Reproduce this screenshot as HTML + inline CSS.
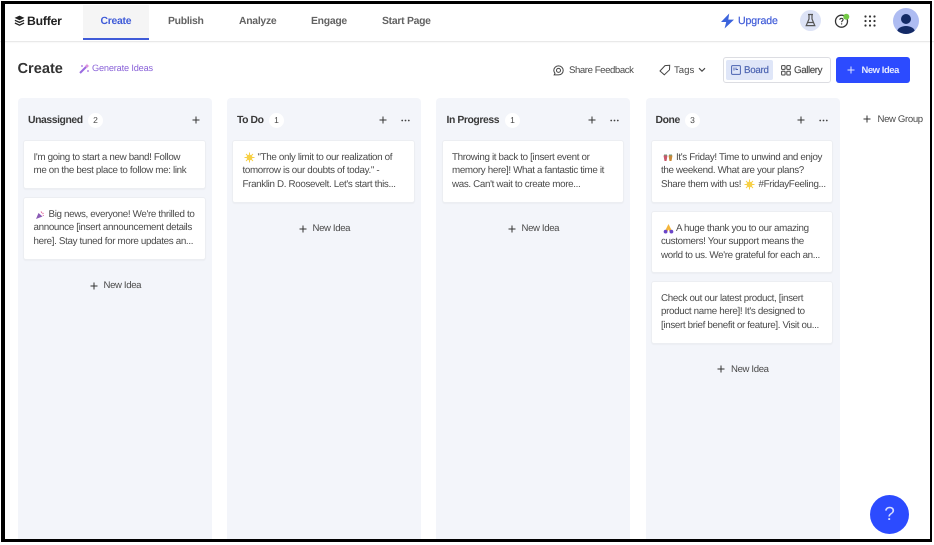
<!DOCTYPE html>
<html lang="en">
<head>
<meta charset="utf-8">
<title>Buffer Create</title>
<style>
html,body{margin:0;padding:0;background:#fff}
body{width:934px;height:544px;overflow:hidden;position:relative;font-family:"Liberation Sans",sans-serif;color:#3d3d3d;text-rendering:geometricPrecision}
#p{position:absolute;left:0;top:0;width:934px;height:544px;overflow:hidden;background:#fff;filter:blur(.35px)}
#p div,#p svg{position:absolute}
.t{white-space:nowrap;line-height:14px}
.nav{top:14.7px;font-size:10.4px;font-weight:bold;color:#636363;letter-spacing:-.27px}
.col{top:98px;width:193.5px;height:445px;background:#f3f5fa;border-radius:4px}
.card{width:182.5px;background:#fff;border:1px solid #eceef2;border-radius:3px;box-sizing:border-box;box-shadow:0 1px 1px rgba(0,0,0,.03)}
.l{font-size:9.8px;letter-spacing:-.34px;color:#4a4a4a;white-space:nowrap;line-height:13.5px}
.h{top:113.5px;font-size:10.4px;font-weight:bold;color:#3a3a3a;white-space:nowrap;line-height:14px;letter-spacing:-.42px}
.bd{top:112.5px;width:15px;height:15px;border-radius:50%;background:#fff;font-size:8.5px;text-align:center;line-height:15px;color:#444}
.ni{font-size:9.6px;color:#4a4a4a;white-space:nowrap;line-height:14px;letter-spacing:-.36px}
.f{position:absolute;background:#000}
</style>
</head>
<body>
<div id="p">

<!-- top nav -->
<div style="left:0;top:0;width:934px;height:41px;background:#fff;border-bottom:1px solid #e9e9e9;box-shadow:0 1px 1px rgba(0,0,0,.03)"></div>
<div style="left:83px;top:5px;width:66px;height:34px;background:#f5f5f5"></div>
<div style="left:83px;top:38px;width:66px;height:2px;background:#3f5bd8"></div>

<svg style="left:14px;top:15px" width="11" height="12" viewBox="0 0 11 12"><path d="M5.5 .6 10.4 2.9 5.5 5.2 .6 2.9Z" fill="#222"/><path d="M.9 5.3 5.5 7.4 10.1 5.3" fill="none" stroke="#222" stroke-width="1.3"/><path d="M.9 8 5.5 10.2 10.1 8" fill="none" stroke="#222" stroke-width="1.3"/></svg>
<div class="t" style="left:27px;top:14px;font-size:12.2px;font-weight:bold;color:#222;letter-spacing:-.2px">Buffer</div>
<div class="t nav" style="left:100.5px;color:#3f5bd8">Create</div>
<div class="t nav" style="left:168px">Publish</div>
<div class="t nav" style="left:239px">Analyze</div>
<div class="t nav" style="left:311px">Engage</div>
<div class="t nav" style="left:382px">Start Page</div>

<svg style="left:720px;top:13px" width="15" height="16" viewBox="0 0 15 16"><path d="M9.2 .5 1 9H6.2L4.6 15.5 14 6.6H8.3Z" fill="#3b63dc"/></svg>
<div class="t nav" style="left:738px;top:14px;color:#3f5bd8;font-weight:normal;font-size:10.6px;letter-spacing:-.12px;-webkit-text-stroke:.2px #3f5bd8">Upgrade</div>

<div style="left:800px;top:10px;width:21px;height:21px;border-radius:50%;background:#dde3f6"></div>
<svg style="left:804px;top:13px" width="13" height="15" viewBox="0 0 13 15"><path d="M4 1.5H9M5 1.5V6L2.2 12.6H10.8L8 6V1.5M3.6 9.5H9.4" fill="none" stroke="#555" stroke-width="1.2"/></svg>
<svg style="left:834px;top:13px" width="16" height="16" viewBox="0 0 16 16"><circle cx="7.5" cy="8.2" r="6" fill="none" stroke="#333" stroke-width="1.3"/><path d="M5.8 6.8C5.9 5.6 6.8 5.2 7.6 5.3 8.6 5.4 9.3 6.1 9 7 8.8 7.8 7.6 8 7.6 9.2" fill="none" stroke="#333" stroke-width="1.1"/><circle cx="7.6" cy="10.9" r=".7" fill="#333"/><circle cx="12.3" cy="3.8" r="3" fill="#74c946"/></svg>
<svg style="left:864px;top:15px" width="12" height="12" viewBox="0 0 12 12" fill="#333"><circle cx="1.5" cy="1.5" r="1.1"/><circle cx="6" cy="1.5" r="1.1"/><circle cx="10.5" cy="1.5" r="1.1"/><circle cx="1.5" cy="6" r="1.1"/><circle cx="6" cy="6" r="1.1"/><circle cx="10.5" cy="6" r="1.1"/><circle cx="1.5" cy="10.5" r="1.1"/><circle cx="6" cy="10.5" r="1.1"/><circle cx="10.5" cy="10.5" r="1.1"/></svg>
<svg style="left:893px;top:8px" width="26" height="26" viewBox="0 0 26 26"><defs><clipPath id="av"><circle cx="13" cy="13" r="13"/></clipPath></defs><circle cx="13" cy="13" r="13" fill="#aebcf2"/><g clip-path="url(#av)"><circle cx="13" cy="11" r="5" fill="#132a66"/><ellipse cx="13" cy="24" rx="9" ry="6" fill="#132a66"/></g></svg>

<!-- toolbar -->
<div class="t" style="left:17.5px;top:61px;font-size:14.6px;font-weight:bold;color:#333;line-height:17px">Create</div>
<svg style="left:79px;top:63px" width="11" height="11" viewBox="0 0 11 11"><path d="M1 10 7 4" stroke="#9a6be0" stroke-width="2" fill="none"/><path d="M8 .5 8.7 2.3 10.5 3 8.7 3.7 8 5.5 7.3 3.7 5.5 3 7.3 2.3Z" fill="#d884d8"/><circle cx="3" cy="3" r="1" fill="#b58ae8"/><circle cx="9" cy="8" r="1" fill="#b58ae8"/></svg>
<div class="t" style="left:92px;top:61px;font-size:9.2px;color:#8a63d8;letter-spacing:-.17px">Generate Ideas</div>

<svg style="left:553px;top:65px" width="11" height="11" viewBox="0 0 11 11"><path d="M5.5 .9C8.2.9 10.2 2.9 10.2 5.4 10.2 7.9 8.2 9.9 5.5 9.9H1.2L2 8.2C1.2 7.4.8 6.5.8 5.4.8 2.9 2.8.9 5.5.9Z" fill="none" stroke="#444" stroke-width="1"/><circle cx="5.5" cy="5.4" r="2" fill="none" stroke="#444" stroke-width="1"/></svg>
<div class="t" style="left:569px;top:64px;font-size:9.6px;color:#4a4a4a;letter-spacing:-.42px">Share Feedback</div>
<svg style="left:659px;top:64px" width="12" height="12" viewBox="0 0 12 12"><path d="M1 7 6 1.6 10.7 1.3 10.5 5.800 5.300 10.800Z" fill="none" stroke="#444" stroke-width="1"/></svg>
<div class="t" style="left:674px;top:64px;font-size:9.6px;color:#4a4a4a">Tags</div>
<svg style="left:698px;top:67px" width="8" height="6" viewBox="0 0 8 6"><path d="M1 1.2 4 4.2 7 1.2" fill="none" stroke="#444" stroke-width="1.1"/></svg>

<div style="left:722.5px;top:57px;width:108px;height:26px;box-sizing:border-box;border:1px solid #dcdde2;border-radius:3px;background:#fff"></div>
<div style="left:726px;top:60px;width:47px;height:20px;background:#dfe6f8;border-radius:2px"></div>
<svg style="left:731px;top:65px" width="10" height="10" viewBox="0 0 10 10"><rect x=".6" y=".6" width="8.8" height="8.8" rx="1" fill="none" stroke="#4a62b0" stroke-width="1"/><path d="M3 2.5V5.5M5 2.5V4.5H7" fill="none" stroke="#4a62b0" stroke-width=".9"/></svg>
<div class="t" style="left:744px;top:64px;font-size:9.8px;color:#4a62b0;letter-spacing:-.3px;-webkit-text-stroke:.15px #4a62b0">Board</div>
<svg style="left:781px;top:64.5px" width="10" height="11" viewBox="0 0 10 11" fill="none" stroke="#444" stroke-width="1"><rect x=".6" y=".6" width="3.5" height="3.8" rx=".6"/><rect x="5.8" y=".6" width="3.5" height="3.8" rx=".6"/><rect x=".6" y="6.2" width="3.5" height="3.8" rx=".6"/><rect x="5.8" y="6.2" width="3.5" height="3.8" rx=".6"/></svg>
<div class="t" style="left:794px;top:64px;font-size:9.8px;color:#4a4a4a;letter-spacing:-.42px;-webkit-text-stroke:.15px #4a4a4a">Gallery</div>

<div style="left:836px;top:57px;width:73.5px;height:26px;background:#2c4bff;border-radius:3px"></div>
<svg style="left:847px;top:66px" width="8" height="8" viewBox="0 0 8 8"><path d="M4 .5V7.5M.5 4H7.5" stroke="#dfe5ff" stroke-width="1"/></svg>
<div class="t" style="left:861.5px;top:63px;font-size:9.4px;color:#e6eaff;font-weight:bold;letter-spacing:-.4px">New Idea</div>

<!-- columns -->
<div class="col" style="left:18px"></div>
<div class="col" style="left:227px"></div>
<div class="col" style="left:436px"></div>
<div class="col" style="left:646px"></div>

<!-- Unassigned -->
<div class="h" style="left:28px">Unassigned</div>
<div class="bd" style="left:88px">2</div>
<svg style="left:192px;top:116px" width="8" height="8" viewBox="0 0 8 8"><path d="M4 .5V7.5M.5 4H7.5" stroke="#333" stroke-width="1"/></svg>
<div class="card" style="left:23px;top:140px;height:48.5px"></div>
<div class="l" style="left:33.5px;top:150.5px">I'm going to start a new band! Follow<br>me on the best place to follow me: link</div>
<div class="card" style="left:23px;top:197px;height:62.5px"></div>
<svg style="left:35px;top:209.5px" width="10" height="10" viewBox="0 0 10 10"><path d="M1 9 3.5 3 7.5 6.5Z" fill="#8a5bb5"/><path d="M6 1.5 7 3M8.5 3 7.5 4M8.8 5.5H7.8" stroke="#e06aa0" stroke-width="1" fill="none"/></svg>
<div class="l" style="left:33.5px;top:207.5px;text-indent:15px">Big news, everyone! We're thrilled to<br><span style="display:inline-block;text-indent:0">announce [insert announcement details</span><br>here]. Stay tuned for more updates an...</div>
<svg style="left:89.5px;top:281.5px" width="8" height="8" viewBox="0 0 8 8"><path d="M4 .5V7.5M.5 4H7.5" stroke="#333" stroke-width="1"/></svg>
<div class="ni" style="left:103.5px;top:278.5px">New Idea</div>

<!-- To Do -->
<div class="h" style="left:237px">To Do</div>
<div class="bd" style="left:269px">1</div>
<svg style="left:379px;top:116px" width="8" height="8" viewBox="0 0 8 8"><path d="M4 .5V7.5M.5 4H7.5" stroke="#333" stroke-width="1"/></svg>
<svg style="left:401px;top:118.5px" width="9" height="3" viewBox="0 0 9 3" fill="#444"><circle cx="1.2" cy="1.5" r=".9"/><circle cx="4.5" cy="1.5" r=".9"/><circle cx="7.8" cy="1.5" r=".9"/></svg>
<div class="card" style="left:232px;top:140px;height:62.5px"></div>
<svg style="left:243.5px;top:151.5px" width="11" height="11" viewBox="0 0 11 11"><circle cx="5.5" cy="5.5" r="2.9" fill="#f7d046"/><path d="M5.5 .5V10.5M.5 5.5H10.5M2 2 9 9M9 2 2 9" stroke="#f7d046" stroke-width="1"/></svg>
<div class="l" style="left:242.5px;top:150.5px;text-indent:15px">"The only limit to our realization of<br><span style="display:inline-block;text-indent:0">tomorrow is our doubts of today." -</span><br>Franklin D. Roosevelt. Let's start this...</div>
<svg style="left:298.5px;top:224.5px" width="8" height="8" viewBox="0 0 8 8"><path d="M4 .5V7.5M.5 4H7.5" stroke="#333" stroke-width="1"/></svg>
<div class="ni" style="left:312.5px;top:222px">New Idea</div>

<!-- In Progress -->
<div class="h" style="left:446.5px">In Progress</div>
<div class="bd" style="left:505px">1</div>
<svg style="left:588px;top:116px" width="8" height="8" viewBox="0 0 8 8"><path d="M4 .5V7.5M.5 4H7.5" stroke="#333" stroke-width="1"/></svg>
<svg style="left:610px;top:118.5px" width="9" height="3" viewBox="0 0 9 3" fill="#444"><circle cx="1.2" cy="1.5" r=".9"/><circle cx="4.5" cy="1.5" r=".9"/><circle cx="7.8" cy="1.5" r=".9"/></svg>
<div class="card" style="left:441.5px;top:140px;height:62.5px"></div>
<div class="l" style="left:452px;top:150.5px">Throwing it back to [insert event or<br>memory here]! What a fantastic time it<br>was. Can't wait to create more...</div>
<svg style="left:507.5px;top:224.5px" width="8" height="8" viewBox="0 0 8 8"><path d="M4 .5V7.5M.5 4H7.5" stroke="#333" stroke-width="1"/></svg>
<div class="ni" style="left:521.5px;top:222px">New Idea</div>

<!-- Done -->
<div class="h" style="left:655.5px">Done</div>
<div class="bd" style="left:685px">3</div>
<svg style="left:797px;top:116px" width="8" height="8" viewBox="0 0 8 8"><path d="M4 .5V7.5M.5 4H7.5" stroke="#333" stroke-width="1"/></svg>
<svg style="left:819px;top:118.5px" width="9" height="3" viewBox="0 0 9 3" fill="#444"><circle cx="1.2" cy="1.5" r=".9"/><circle cx="4.5" cy="1.5" r=".9"/><circle cx="7.8" cy="1.5" r=".9"/></svg>

<div class="card" style="left:650.5px;top:140px;height:62.5px"></div>
<svg style="left:663px;top:153.5px" width="10" height="8" viewBox="0 0 10 8"><path d="M.5 1.5H4.5L3.5 7H1.5Z" fill="#c9586a"/><path d="M5.5 1.5H9.5L8.5 7H6.5Z" fill="#c98a3a"/><path d="M1 1H4M6 1H9" stroke="#6d9a7c" stroke-width="1"/></svg>
<div class="l" style="left:661px;top:150.5px;text-indent:15px">It's Friday! Time to unwind and enjoy<br><span style="display:inline-block;text-indent:0">the weekend. What are your plans?</span><br><span style="display:inline-block;text-indent:0">Share them with us! <span style="display:inline-block;width:15px"></span>#FridayFeeling...</span></div>
<svg style="left:744px;top:178.5px" width="11" height="11" viewBox="0 0 11 11"><circle cx="5.5" cy="5.5" r="2.9" fill="#f7d046"/><path d="M5.5 .5V10.5M.5 5.5H10.5M2 2 9 9M9 2 2 9" stroke="#f7d046" stroke-width="1"/></svg>

<div class="card" style="left:650.5px;top:210.5px;height:62.5px"></div>
<svg style="left:662.5px;top:222.5px" width="11" height="11" viewBox="0 0 11 11"><path d="M5.5 1 7.5 5 9.5 9H6.8L5.5 6.5 4.2 9H1.5L3.5 5Z" fill="#f4b53a"/><circle cx="2.6" cy="8.6" r="1.9" fill="#6a45c8"/><circle cx="8.4" cy="8.6" r="1.9" fill="#6a45c8"/></svg>
<div class="l" style="left:661px;top:221.5px;text-indent:15px">A huge thank you to our amazing<br><span style="display:inline-block;text-indent:0">customers! Your support means the</span><br>world to us. We're grateful for each an...</div>

<div class="card" style="left:650.5px;top:281px;height:62.5px"></div>
<div class="l" style="left:661px;top:291.8px">Check out our latest product, [insert<br>product name here]! It's designed to<br>[insert brief benefit or feature]. Visit ou...</div>

<svg style="left:717px;top:365px" width="8" height="8" viewBox="0 0 8 8"><path d="M4 .5V7.5M.5 4H7.5" stroke="#333" stroke-width="1"/></svg>
<div class="ni" style="left:731px;top:363px">New Idea</div>

<!-- new group -->
<svg style="left:863px;top:115px" width="8" height="8" viewBox="0 0 8 8"><path d="M4 .5V7.5M.5 4H7.5" stroke="#333" stroke-width="1"/></svg>
<div class="ni" style="left:877.5px;top:112.5px">New Group</div>

<!-- help -->
<div style="left:870px;top:494.5px;width:39px;height:39px;border-radius:50%;background:#2c4bff"></div>
<div class="t" style="left:870px;top:505px;width:39px;text-align:center;color:#d5dcff;font-size:19px;line-height:20px">?</div>
</div>

<!-- frame: sharp, with a thin white margin outside -->
<div class="f" style="left:1px;top:1px;width:931px;height:3px"></div>
<div class="f" style="left:1px;top:539px;width:931px;height:2.5px"></div>
<div class="f" style="left:1px;top:1px;width:3.5px;height:540.5px"></div>
<div class="f" style="left:929.5px;top:1px;width:2.5px;height:540.5px"></div>
<div style="position:absolute;left:0;top:541.5px;width:934px;height:3px;background:#fff"></div>
</body>
</html>
